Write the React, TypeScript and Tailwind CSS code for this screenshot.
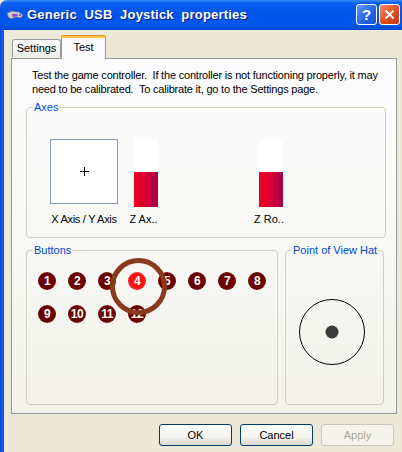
import React from "react";

const font = { fontFamily: '"Liberation Sans", Arial, sans-serif' };

function TitleIcon() {
  return (
    <svg width="18" height="14" viewBox="0 0 18 14">
      <path d="M1 5 L6 3 L13 4 L17 7 L15 10 L10 9 L5 11 L2 9 Z" fill="#c8c8d8" stroke="#6a6a8a" strokeWidth="0.8" />
      <path d="M6 6 L11 6 L12 8 L7 9 Z" fill="#a040c0" />
      <circle cx="14" cy="7" r="1" fill="#3060e0" />
    </svg>
  );
}

function HelpButton() {
  return (
    <div className="w-[21px] h-[21px] rounded-[3px] border border-white bg-[linear-gradient(135deg,#5a9bff_0%,#2463e8_60%,#1a4fd0_100%)] flex items-center justify-center text-white font-bold text-[15px] leading-none">
      ?
    </div>
  );
}

function CloseButton() {
  return (
    <div className="w-[21px] h-[21px] rounded-[3px] border border-white bg-[linear-gradient(135deg,#f09070_0%,#e04a1e_55%,#c83c10_100%)] flex items-center justify-center">
      <svg width="11" height="11" viewBox="0 0 11 11">
        <path d="M1.5 1.5 L9.5 9.5 M9.5 1.5 L1.5 9.5" stroke="white" strokeWidth="2" />
      </svg>
    </div>
  );
}

function Legend({ children }: { children: React.ReactNode }) {
  return <legend className="ml-[6px] px-[1px] text-[11px] leading-[12px] text-[#0046d5]">{children}</legend>;
}

function Bar() {
  return (
    <div className="w-[24px] h-[68px] flex flex-col">
      <div className="h-[33px] bg-white" />
      <div className="flex-1 bg-[linear-gradient(90deg,#f00020_0%,#d80034_50%,#a0004c_100%)]" />
    </div>
  );
}

function JoyButton({ n, on }: { n: number; on?: boolean }) {
  return (
    <div
      className={
        "w-[18px] h-[18px] rounded-full flex items-center justify-center text-white font-bold text-[12px] leading-none tracking-[-0.5px] " +
        (on
          ? "bg-[radial-gradient(circle,#ff1010_55%,#f06070_100%)]"
          : "bg-[radial-gradient(circle,#6a0000_60%,#9a4048_100%)]")
      }
    >
      {n}
    </div>
  );
}

function XPButton({ label, disabled }: { label: string; disabled?: boolean }) {
  return (
    <div
      className={
        "w-[73px] h-[22px] rounded-[3px] border flex items-center justify-center text-[11px] " +
        (disabled
          ? "border-[#c9c7ba] bg-[#f5f4ea] text-[#aca899]"
          : "border-[#003c74] bg-[linear-gradient(180deg,#ffffff_0%,#f4f3ee_60%,#dcd9cc_100%)] text-black")
      }
    >
      {label}
    </div>
  );
}

export default function App() {
  return (
    <div className="w-[402px] h-[452px] overflow-hidden flex flex-col bg-[#ece9d8]" style={font}>
      {/* title bar */}
      <div className="h-[30px] shrink-0 rounded-tl-[7px] bg-[linear-gradient(180deg,#3c8dff_0%,#0a5ef0_10%,#0055ea_45%,#0058ee_80%,#0048d0_100%)] flex items-center pl-[6px] pr-[2px]">
        <TitleIcon />
        <div className="ml-[3px] text-white font-bold text-[13px] tracking-[0.2px] whitespace-pre [text-shadow:1px_1px_0_#0a1e78]">
          Generic  USB  Joystick  properties
        </div>
        <div className="ml-auto flex gap-[2px] mb-[2px]">
          <HelpButton />
          <CloseButton />
        </div>
      </div>

      <div className="flex-1 flex">
        {/* left frame */}
        <div className="w-[4px] bg-[linear-gradient(90deg,#0831d9_0%,#166aee_50%,#0a50e0_100%)]" />

        <div className="flex-1 flex flex-col pl-[7px] pr-[5px]">
          {/* tabs */}
          <div className="flex items-end h-[28px] pl-[1px]">
            <div className="h-[18px] w-[49px] border border-b-0 border-[#919b9c] rounded-t-[3px] bg-[linear-gradient(180deg,#ffffff_0%,#ecebe6_100%)] text-[11px] flex items-center justify-center mb-[1px]">
              Settings
            </div>
            <div className="relative h-[23px] w-[45px] border-x border-[#919b9c] bg-[#fcfcfe] text-[11px] flex justify-center pt-[3px] -mb-[1px] z-10">
              <div className="absolute -top-[1px] -left-[1px] -right-[1px] h-[3px] rounded-t-[3px] bg-[#ffc83c] border-t border-[#e68b2c]" />
              Test
            </div>
          </div>

          {/* panel */}
          <div className="h-[356px] border border-[#919b9c] bg-[linear-gradient(180deg,#fcfcfe_0%,#f8f8f5_50%,#f2f1ea_100%)] pl-[14px] pr-[10px] pt-[9px] flex flex-col">
            <p className="pl-[6px] text-[11px] leading-[14px] text-black whitespace-nowrap tracking-[-0.2px]">
              Test the game controller.&nbsp; If the controller is not functioning properly, it may
              <br />
              need to be calibrated.&nbsp; To calibrate it, go to the Settings page.
            </p>

            <fieldset className="mt-[5px] h-[137px] border border-[#d0d0bf] rounded-[4px]">
              <Legend>Axes</Legend>
              <div className="flex pt-[26px] pl-[23px]">
                <div className="flex flex-col items-center">
                  <div className="w-[68px] h-[65px] border border-[#7f9db9] bg-white flex items-center justify-center">
                    <svg width="9" height="9" viewBox="0 0 9 9">
                      <path d="M4.5 0 V9 M0 4.5 H9" stroke="black" strokeWidth="1" />
                    </svg>
                  </div>
                  <div className="mt-[9px] text-[11px] leading-[12px] whitespace-nowrap tracking-[-0.3px]">X Axis / Y Axis</div>
                </div>
                <div className="ml-[16px] flex flex-col items-center">
                  <Bar />
                  <div className="mt-[6px] text-[11px] leading-[12px] -ml-[5px]">Z Ax..</div>
                </div>
                <div className="ml-[101px] flex flex-col items-center">
                  <Bar />
                  <div className="mt-[6px] text-[11px] leading-[12px] -ml-[5px]">Z Ro..</div>
                </div>
              </div>
            </fieldset>

            <div className="mt-[6px] flex gap-[7px]">
              <fieldset className="relative w-[252px] h-[161px] border border-[#d0d0bf] rounded-[4px]">
                <Legend>Buttons</Legend>
                <div className="grid grid-cols-8 gap-x-[12px] gap-y-[15px] w-max pl-[11px] pt-[16px]">
                  {[1, 2, 3, 4, 5, 6, 7, 8, 9, 10, 11, 12].map((n) => (
                    <JoyButton key={n} n={n} on={n === 4} />
                  ))}
                </div>
                {/* highlight ring drawn over button 4 */}
                <div className="absolute left-[83px] top-[2px] w-[57px] h-[57px] rounded-full border-[5px] border-[#8a3a1c]" />
              </fieldset>

              <fieldset className="w-[99px] h-[161px] border border-[#d0d0bf] rounded-[4px]">
                <Legend>Point of View Hat</Legend>
                <div className="pl-[12px] pt-[42px]">
                  <svg width="68" height="68" viewBox="0 0 68 68">
                    <circle cx="34" cy="34" r="32.5" fill="none" stroke="black" strokeWidth="1" />
                    <circle cx="34" cy="34" r="6.5" fill="#3a3a3a" />
                  </svg>
                </div>
              </fieldset>
            </div>
          </div>

          {/* dialog buttons */}
          <div className="flex justify-end gap-[8px] pr-[3px] pt-[10px]">
            <XPButton label="OK" />
            <XPButton label="Cancel" />
            <XPButton label="Apply" disabled />
          </div>
        </div>
      </div>
    </div>
  );
}
